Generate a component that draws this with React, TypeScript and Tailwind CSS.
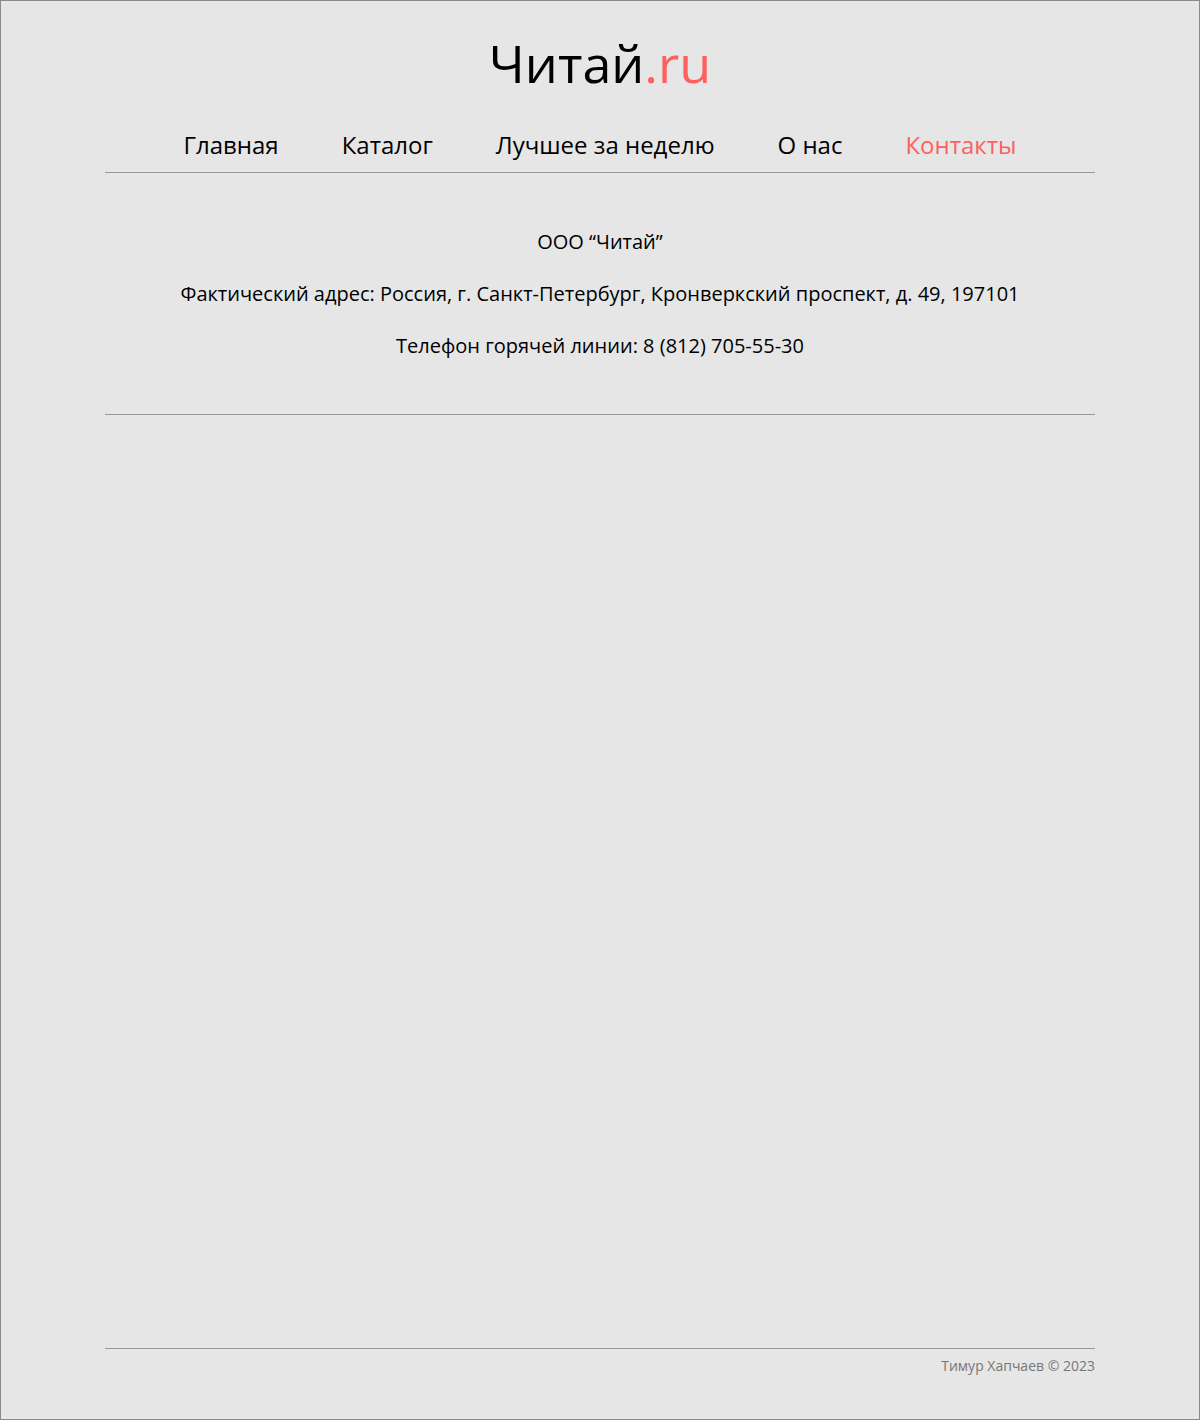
export default function App() {
  const links = ['Главная', 'Каталог', 'Лучшее за неделю', 'О нас', 'Контакты'];

  return (
    <div className="h-[1420px] border border-[#8a8a8a] bg-[#e6e6e6] font-['Open_Sans',sans-serif] text-black">
      <div className="mx-auto flex h-full w-[990px] flex-col">
        <header>
          <h1 className="pt-[26px] text-center text-[52px] leading-[72px]">
            Читай<span className="text-[#ff5f5f]">.ru</span>
          </h1>
          <nav className="mt-[28px] flex justify-center gap-[63px] border-b border-[#999] pb-[9px] text-[24px] leading-[36px]">
            {links.map((link) => (
              <a key={link} href="#" className={link === 'Контакты' ? 'text-[#ff5f5f]' : ''}>
                {link}
              </a>
            ))}
          </nav>
        </header>

        <main className="flex flex-col gap-[24px] border-b border-[#999] pt-[55px] pb-[54px] text-center text-[20px] leading-[28px]">
          <p>ООО “Читай”</p>
          <p>Фактический адрес: Россия, г. Санкт-Петербург, Кронверкский проспект, д. 49, 197101</p>
          <p>Телефон горячей линии: 8 (812) 705-55-30</p>
        </main>

        <footer className="mt-auto mb-[43px] border-t border-[#999] pt-[7px] text-right text-[14px] leading-[20px] text-[#777]">
          Тимур Хапчаев © 2023
        </footer>
      </div>
    </div>
  );
}
